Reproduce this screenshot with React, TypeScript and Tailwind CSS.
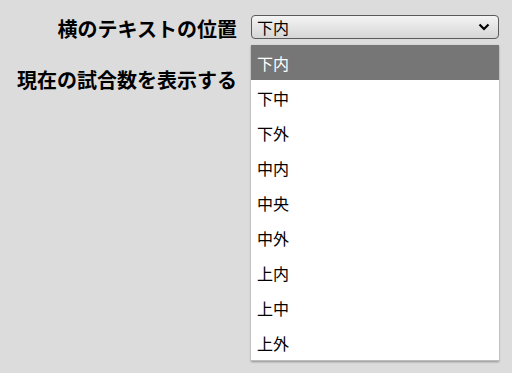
import React from "react";

const items = ["下内", "下中", "下外", "中内", "中央", "中外", "上内", "上中", "上外"];

export default function App() {
  return (
    <div
      className="w-[512px] h-[373px] bg-[#dcdcdc] relative overflow-hidden text-black"
      style={{ fontFamily: '"Noto Sans CJK JP", "Noto Sans", sans-serif' }}
    >
      <div className="flex pt-[15px]">
        <div className="w-[237px] flex flex-col items-end font-bold text-[20px] leading-[20px]">
          <div className="mt-[4px] whitespace-nowrap">横のテキストの位置</div>
          <div className="mt-[31px] whitespace-nowrap">現在の試合数を表示する</div>
        </div>
        <div className="ml-[14px] relative">
          <div className="w-[248px] h-[24px] rounded-[4px] border border-[#5a5a5a] bg-gradient-to-b from-[#f4f4f4] to-[#d6d6d6] flex items-center justify-between pl-[5px] pr-[8px] text-[16px] leading-none">
            <span>下内</span>
            <svg width="12" height="8" viewBox="0 0 12 8">
              <path d="M1.5 1.5 L6 6 L10.5 1.5" fill="none" stroke="#000" strokeWidth="2.2" />
            </svg>
          </div>
          <div className="absolute left-0 top-[30px] w-[248px] bg-white shadow-[0_1px_2px_rgba(0,0,0,0.35)] border-b border-[#bdbdbd]">
            {items.map((it, i) => (
              <div
                key={it}
                className={
                  "h-[35px] flex items-center pl-[6px] text-[16px] leading-none " +
                  (i === 0 ? "bg-[#767676] text-white" : "")
                }
              >
                {it}
              </div>
            ))}
          </div>
        </div>
      </div>
    </div>
  );
}
